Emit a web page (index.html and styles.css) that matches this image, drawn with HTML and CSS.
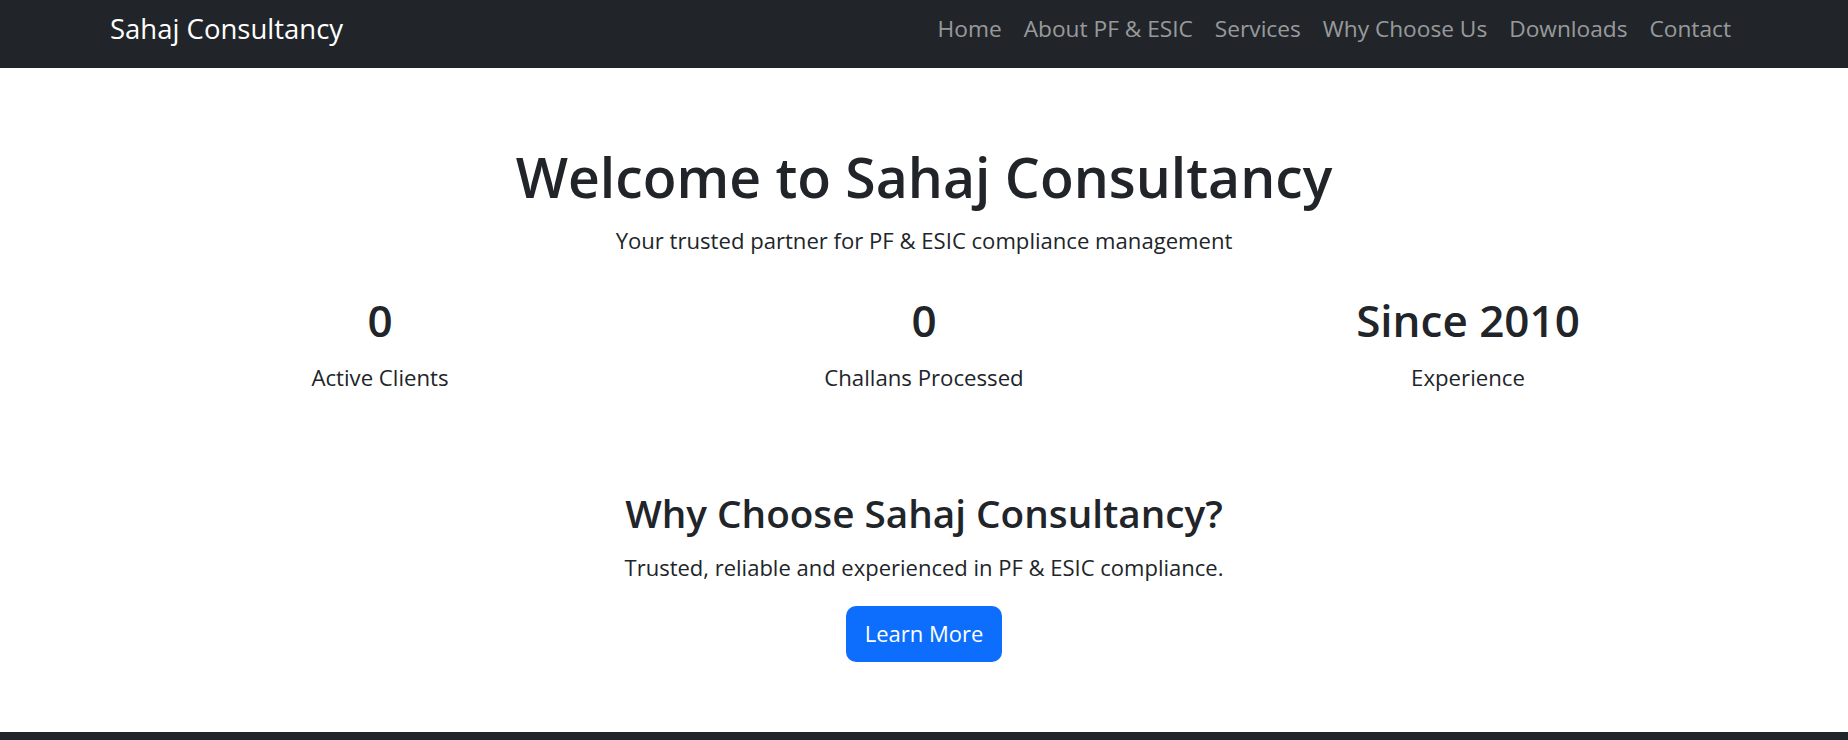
FILE: index.html
```html
<!DOCTYPE html>
<html lang="en">
<head>
<meta charset="utf-8">
<title>Sahaj Consultancy</title>
<link rel="stylesheet" href="styles.css">
</head>
<body>
<nav class="navbar">
  <div class="container nav-inner">
    <a class="brand" href="#">Sahaj Consultancy</a>
    <ul class="nav-links">
      <li><a href="#">Home</a></li>
      <li><a href="#">About PF &amp; ESIC</a></li>
      <li><a href="#">Services</a></li>
      <li><a href="#">Why Choose Us</a></li>
      <li><a href="#">Downloads</a></li>
      <li><a href="#">Contact</a></li>
    </ul>
  </div>
</nav>
<main>
  <section class="container hero">
    <h1 class="hero-title">Welcome to Sahaj Consultancy</h1>
    <p class="hero-sub">Your trusted partner for PF &amp; ESIC compliance management</p>
    <div class="stats">
      <div class="stat">
        <h2 class="stat-num">0</h2>
        <p class="stat-label">Active Clients</p>
      </div>
      <div class="stat">
        <h2 class="stat-num">0</h2>
        <p class="stat-label">Challans Processed</p>
      </div>
      <div class="stat">
        <h2 class="stat-num">Since 2010</h2>
        <p class="stat-label">Experience</p>
      </div>
    </div>
  </section>
  <section class="container why">
    <h2 class="why-title">Why Choose Sahaj Consultancy?</h2>
    <p class="why-text">Trusted, reliable and experienced in PF &amp; ESIC compliance.</p>
    <a class="btn-primary" href="#">Learn More</a>
  </section>
</main>
<footer class="footer"></footer>
</body>
</html>
```

FILE: styles.css
```css
* { box-sizing: border-box; }

body {
  margin: 0;
  font-family: "Open Sans", "Noto Sans", sans-serif;
  color: #212529;
  background: #fff;
}

.container {
  width: 1632px;
  margin: 0 auto;
}

/* Navbar */
.navbar {
  background: #212529;
  padding: 10px 0 20px;
}

.nav-inner {
  display: flex;
  align-items: center;
  justify-content: space-between;
  height: 38px;
}

.brand {
  color: #fff;
  text-decoration: none;
  font-size: 27.5px;
  line-height: 38px;
  padding-left: 2px;
}

.nav-links {
  display: flex;
  list-style: none;
  margin: 0 -2px 0 0;
  padding: 0;
}

.nav-links a {
  display: block;
  padding: 0 11px;
  color: rgba(255, 255, 255, 0.55);
  text-decoration: none;
  font-size: 22.7px;
  line-height: 32px;
}

/* Hero */
.hero {
  display: flex;
  flex-direction: column;
  align-items: center;
  text-align: center;
  padding-top: 74px;
}

.hero-title {
  margin: 0;
  font-size: 55.3px;
  font-weight: 600;
  line-height: 70px;
}

.hero-sub {
  margin: 12px 0 0;
  font-size: 22.1px;
  line-height: 32px;
}

.stats {
  display: grid;
  grid-template-columns: repeat(3, 1fr);
  width: 100%;
  margin-top: 37px;
}

.stat-num {
  margin: 0;
  font-size: 44px;
  font-weight: 600;
  line-height: 54px;
}

.stat-label {
  margin: 15px 0 0;
  font-size: 22.2px;
  line-height: 32px;
}

/* Why section */
.why {
  display: flex;
  flex-direction: column;
  align-items: center;
  text-align: center;
  padding-top: 95px;
  padding-bottom: 70px;
}

.why-title {
  margin: 0;
  font-size: 38.7px;
  font-weight: 600;
  line-height: 48px;
}

.why-text {
  margin: 14px 0 0;
  font-size: 22px;
  line-height: 32px;
}

.btn-primary {
  display: inline-block;
  margin-top: 23px;
  padding: 11px 19px 12px;
  background: #0d6efd;
  color: #fff;
  text-decoration: none;
  font-size: 22px;
  line-height: 33px;
  border-radius: 10px;
}

.footer {
  background: #212529;
  height: 160px;
}
```
